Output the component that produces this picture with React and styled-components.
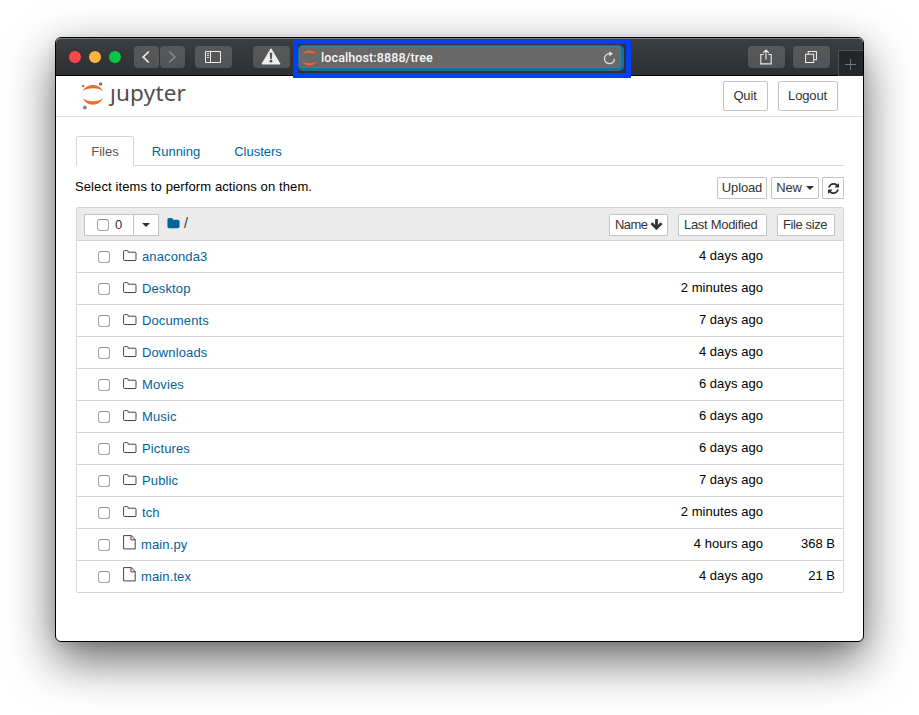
import React from "react";
import styled, { createGlobalStyle } from "styled-components";

const GlobalStyle = createGlobalStyle`
  *, *::before, *::after { box-sizing: border-box; }
  html, body { margin: 0; background: #fff; }
  body { font: 13px/20px "Liberation Sans", Arial, sans-serif; color: #000; overflow: hidden; }
  svg { display: block; flex: none; }
  button { font: inherit; margin: 0; cursor: pointer; }
`;

const Desktop = styled.div`
  width: 919px;
  height: 715px;
  padding: 37px 0 0 55px;
  background: #fff;
  overflow: hidden;
`;

const BrowserWindow = styled.div`
  width: 809px;
  height: 605px;
  border: 1px solid #000;
  border-radius: 6px;
  background: #fff;
  box-shadow: 0 18px 48px rgba(0, 0, 0, 0.6), 0 3px 12px rgba(0, 0, 0, 0.1);
`;

/* ---------- browser chrome ---------- */

const Toolbar = styled.header`
  display: flex;
  align-items: flex-start;
  height: 38px;
  padding: 8px 0 0 13px;
  background: linear-gradient(#3c3d3f, #2e2f31);
  border-top: 1px solid #77787a;
  border-bottom: 1px solid #000;
  border-radius: 5px 5px 0 0;
`;

const TrafficLights = styled.div`
  display: flex;
  gap: 8px;
  padding-top: 4px;
  margin-right: 13px;
`;

const Light = styled.span`
  width: 12px;
  height: 12px;
  border-radius: 50%;
  background: ${(p) => p.$color};
`;

const ChromeButton = styled.button`
  display: flex;
  align-items: center;
  justify-content: center;
  width: ${(p) => p.$width || 37}px;
  height: 22px;
  padding: 0 1px 0 0;
  margin-top: -1px;
  margin-right: ${(p) => p.$gap || 0}px;
  border: 0;
  border-radius: 4px;
  background: linear-gradient(#58595b, #525355);
  color: ${(p) => (p.$dim ? "#88898b" : "#ededed")};
`;

const AddressHighlight = styled.div`
  width: 338px;
  height: 38px;
  margin: -7px 117px 0 3px;
  padding: 1px 3px 0 0;
  border: 4px solid #0040f5;
  border-width: 4px 5px 5px 5px;
  background: #303133;
  position: relative;
  z-index: 1;
`;

const AddressField = styled.div`
  display: flex;
  align-items: center;
  width: 326px;
  height: 26px;
  padding: 2px 5px 0 3px;
  border: 1px solid #1b6f9c;
  border-width: 1px 3px 3px 1px;
  border-radius: 5px;
  background: #686868;
  box-shadow: inset 0 0 0 1px #3681a3;
`;

const Url = styled.span`
  flex: 1;
  margin-left: 4px;
  font: 500 12.5px/20px Roboto, "Open Sans", sans-serif;
  letter-spacing: 0.11px;
  color: #f6f6f6;
`;

const NewTab = styled.button`
  display: flex;
  align-items: center;
  justify-content: center;
  width: 25px;
  height: 26px;
  margin: 3px 0 0 8px;
  padding: 2px 2px 0 0;
  border: 1px solid #505153;
  border-width: 1px 0 0 1px;
  background: #252627;
  color: #77787a;
`;

/* ---------- page header ---------- */

const PageHeader = styled.header`
  display: flex;
  align-items: flex-start;
  height: 41px;
  padding: 5px 25px 0 26px;
  border-bottom: 1px solid #e3e3e3;
`;

const Logo = styled.div`
  display: flex;
  flex: 1;
`;

const Wordmark = styled.span`
  margin: -1px 0 0 5px;
  font: 400 22.5px/26px "Noto Sans", "Open Sans", sans-serif;
  letter-spacing: 0.2px;
  color: #4e4e4e;
  white-space: nowrap;
`;

const ClippedLetter = styled.span`
  display: inline-block;
  clip-path: inset(9px -4px -4px -4px);
`;

const HeaderButton = styled.button`
  width: ${(p) => p.$width}px;
  height: 30px;
  margin-left: 10px;
  padding: 0 1px 0 0;
  letter-spacing: -0.15px;
  border: 1px solid #c4c4c4;
  border-radius: 2px;
  background: #fff;
  color: #333;
`;

/* ---------- notebook tree ---------- */

const Page = styled.main`
  padding: 19px 19px 0 20px;
`;

const Tabs = styled.nav`
  display: flex;
  height: 30px;
  border-bottom: 1px solid #d6d6d6;
`;

const Tab = styled.a`
  height: ${(p) => (p.$active ? 30 : 29)}px;
  width: ${(p) => p.$width}px;
  padding-top: 5px;
  text-align: center;
  color: ${(p) => (p.$active ? "#555" : "#00639a")};
  background: #fff;
  border: 1px solid ${(p) => (p.$active ? "#d6d6d6" : "transparent")};
  border-bottom: 0;
  border-radius: 2px 2px 0 0;
`;

const ActionBar = styled.div`
  display: flex;
  align-items: center;
  gap: 4px;
  height: 22px;
  margin: 11px 0 8px;
`;

const Hint = styled.span`
  flex: 1;
  margin: -3px 0 0 -1px;
  letter-spacing: 0.11px;
`;

const SmallButton = styled.button`
  display: flex;
  align-items: center;
  justify-content: ${(p) => (p.$start ? "flex-start" : "center")};
  gap: ${(p) => (p.$start ? 3 : 4)}px;
  width: ${(p) => p.$width}px;
  height: 22px;
  padding: 0 ${(p) => (p.$start ? 5 : 0)}px;
  margin-left: ${(p) => p.$nudge || 0}px;
  border: 1px solid #c4c4c4;
  border-radius: 1px;
  background: #fff;
  color: #333;
  letter-spacing: ${(p) => p.$tracking || 0}px;
  white-space: nowrap;
`;

const FileTable = styled.section`
  border: 1px solid #d6d6d6;
  border-radius: 2px;
`;

const TableHead = styled.div`
  display: flex;
  align-items: center;
  height: 33px;
  padding: 1px 8px 0 7px;
  background: #ebebeb;
  border-bottom: 1px solid #d6d6d6;
`;

const SelectGroup = styled.div`
  display: flex;
  width: 75px;
  height: 22px;
  margin-right: 8px;
  border: 1px solid #c4c4c4;
  background: #fff;
  color: #333;
`;

const SelectAll = styled.label`
  display: flex;
  align-items: center;
  gap: 6px;
  width: 49px;
  padding-left: 12px;
  border-right: 1px solid #c4c4c4;
`;

const SelectMenu = styled.span`
  display: flex;
  flex: 1;
  align-items: center;
  justify-content: center;
  padding-top: 1px;
`;

const Breadcrumb = styled.span`
  display: flex;
  flex: 1;
  align-items: center;
  gap: 4px;
  margin-top: -3px;
  font-size: 14px;
  color: #333;
`;

const SortButtons = styled.div`
  display: flex;
  gap: 10px;
`;

const Checkbox = styled.input`
  appearance: none;
  width: 12px;
  height: 12px;
  margin: 0;
  flex: none;
  border: 1px solid #a2a2a2;
  border-top-color: #8c8c8c;
  border-radius: 3px;
  background: #fff;
`;

const Row = styled.div`
  display: flex;
  align-items: center;
  height: 32px;
  padding: 0 8px 0 21px;
  border-bottom: 1px solid #d6d6d6;
  &:last-child { height: 31px; border-bottom: 0; }
`;

const IconSlot = styled.span`
  width: 14px;
  margin: ${(p) => (p.$file ? "-5px 4px 0 13px" : "-1px 5px 0 13px")};
`;

const FileName = styled.a`
  flex: 1;
  letter-spacing: 0.12px;
  color: #00639a;
`;

const Modified = styled.span`
  margin: -2px 0 0;
  letter-spacing: 0.05px;
`;

const Size = styled.span`
  width: 72px;
  margin-top: -2px;
  text-align: right;
`;

/* ---------- icons ---------- */

const Glyph = ({ d, size = 14, color = "currentColor" }) => (
  <svg width={size} height={size} viewBox="0 0 1792 1792" fill={color}><path d={d} /></svg>
);

const FOLDER = "M1728 608v704q0 92-66 158t-158 66h-1216q-92 0-158-66t-66-158v-960q0-92 66-158t158-66h320q92 0 158 66t66 158v32h672q92 0 158 66t66 158z";
const ARROW_DOWN = "M1675 832q0 53-37 90l-651 652q-39 37-91 37-53 0-90-37l-651-652q-38-36-38-90 0-53 38-91l74-75q39-37 91-37 53 0 90 37l294 294v-704q0-52 38-90t90-38h128q52 0 90 38t38 90v704l294-294q37-37 90-37 52 0 91 37l75 75q37 39 37 91z";
const REFRESH = "M1639 1056q0 5-1 7-64 268-268 434.5t-478 166.5q-146 0-282.5-55t-243.5-157l-129 129q-19 19-45 19t-45-19-19-45v-448q0-26 19-45t45-19h448q26 0 45 19t19 45-19 45l-137 137q71 66 161 102t187 36q134 0 250-65t186-179q11-17 53-117 8-23 30-23h192q13 0 22.5 9.5t9.5 22.5zm25-800v448q0 26-19 45t-45 19h-448q-26 0-45-19t-19-45 19-45l138-138q-148-137-349-137-134 0-250 65t-186 179q-11 17-53 117-8 23-30 23h-199q-13 0-22.5-9.5t-9.5-22.5v-7q65-268 270-434.5t480-166.5q146 0 284 55.5t245 156.5l130-129q19-19 45-19t45 19 19 45z";

const Caret = () => (
  <svg width="8" height="4" viewBox="0 0 8 4"><path d="M0 0h8L4 4z" fill="#333" /></svg>
);

const Chevron = ({ flip }) => (
  <svg width="10" height="14" viewBox="0 0 10 14" fill="none" stroke="currentColor" strokeWidth="1.7">
    <path d={flip ? "M2.2 1.5 7.8 7l-5.6 5.5" : "M7.8 1.5 2.2 7l5.6 5.5"} />
  </svg>
);

const SidebarIcon = () => (
  <svg width="16" height="12" viewBox="0 0 16 12" fill="none" stroke="currentColor">
    <path d="M.5.5h15v11H.5zM5.5.5v11" />
    <path d="M2 2.5h2M2 4.5h2M2 6.5h2" strokeWidth=".9" />
  </svg>
);

const WarningIcon = () => (
  <svg width="20" height="18" viewBox="0 0 20 18">
    <path d="M10 1.3 18.6 15.8H1.4z" fill="#ededed" stroke="#ededed" strokeWidth="1.6" strokeLinejoin="round" />
    <path d="M8.7 4.8h2.6l-.5 6.2H9.2z" fill="#505153" />
    <circle cx="10" cy="13.2" r="1.4" fill="#505153" />
  </svg>
);

const ShareIcon = () => (
  <svg width="12" height="16" viewBox="0 0 12 16" fill="none" stroke="currentColor" strokeWidth="1.1">
    <path d="M3.6 5.5H.8v9.4h10.4V5.5H8.4M6 10.5V1M3.2 3.8 6 1l2.8 2.8" />
  </svg>
);

const WindowsIcon = () => (
  <svg width="12" height="12" viewBox="0 0 13 13" fill="none" stroke="currentColor" strokeWidth="1.1">
    <path d="M.6 3.6h8.8v8.8H.6zM3.5 3.2V.6h8.9v8.8H9.8" />
  </svg>
);

const PlusIcon = () => (
  <svg width="11" height="11" viewBox="0 0 11 11" stroke="currentColor"><path d="M5.5 0v11M0 5.5h11" /></svg>
);

const ReloadIcon = () => (
  <svg width="13" height="14" viewBox="0 0 13 14" fill="none" stroke="#e5e5e5" strokeWidth="1.2">
    <path d="M6.5 2.7a5 5 0 1 0 5 5" />
    <path d="M6.2.2 10 2.7 6.2 5.2z" fill="#e5e5e5" stroke="none" />
  </svg>
);

const Favicon = () => (
  <svg width="15" height="16" viewBox="0 0 15 16" fill="#f4622d">
    <path d="M.2 4.8C3.2-.9 11.8-.9 14.8 4.8 10.6 2.2 4.4 2.2.2 4.8zM.2 11.2c3 5.7 11.6 5.7 14.6 0-4.2 2.6-10.4 2.6-14.6 0z" />
  </svg>
);

const JupyterMark = () => (
  <svg width="23" height="29" viewBox="0 0 23 29">
    <path d="M.9 10.4C4 1.9 17.8 1.9 20.9 10.4 17 6.1 4.8 6.1.9 10.4zM.9 17C4 25.9 17.8 25.9 20.9 17 17 21.3 4.8 21.3.9 17z" fill="#f4692e" />
    <circle cx="18.6" cy="2.9" r="1.7" fill="#717171" />
    <circle cx="1.2" cy="5.1" r="1.2" fill="#717171" />
    <circle cx="2.9" cy="26.5" r="2" fill="#8a8a8a" />
  </svg>
);

const FolderIcon = () => (
  <svg width="14" height="12" viewBox="0 0 14 12" fill="none" stroke="#444">
    <path d="M.6 9.5v-8q0-.9.9-.9h2.8q.9 0 .9.9v.7h6.8q1 0 1 1v6.3q0 1-1 1H1.6q-1 0-1-1z" />
  </svg>
);

const FileIcon = () => (
  <svg width="13" height="15" viewBox="0 0 13 15" fill="none" stroke="#444">
    <path d="M.6.6h7.8l3.8 3.9v9.4H.6zM8 .6v4.2h4.2" />
  </svg>
);

/* ---------- data ---------- */

const entries = [
  ["anaconda3", "4 days ago"],
  ["Desktop", "2 minutes ago"],
  ["Documents", "7 days ago"],
  ["Downloads", "4 days ago"],
  ["Movies", "6 days ago"],
  ["Music", "6 days ago"],
  ["Pictures", "6 days ago"],
  ["Public", "7 days ago"],
  ["tch", "2 minutes ago"],
  ["main.py", "4 hours ago", "368 B"],
  ["main.tex", "4 days ago", "21 B"],
];

export default function App() {
  return (
    <Desktop>
      <GlobalStyle />
      <BrowserWindow>
        <Toolbar>
          <TrafficLights>
            <Light $color="#fc4a4b" />
            <Light $color="#fdb43e" />
            <Light $color="#0bc44a" />
          </TrafficLights>
          <ChromeButton $width={25} $gap={1}><Chevron /></ChromeButton>
          <ChromeButton $width={25} $gap={10} $dim><Chevron flip /></ChromeButton>
          <ChromeButton $gap={21}><SidebarIcon /></ChromeButton>
          <ChromeButton><WarningIcon /></ChromeButton>
          <AddressHighlight>
            <AddressField>
              <Favicon />
              <Url>localhost:8888/tree</Url>
              <ReloadIcon />
            </AddressField>
          </AddressHighlight>
          <ChromeButton $gap={8}><ShareIcon /></ChromeButton>
          <ChromeButton><WindowsIcon /></ChromeButton>
          <NewTab><PlusIcon /></NewTab>
        </Toolbar>

        <PageHeader>
          <Logo>
            <JupyterMark />
            <Wordmark><ClippedLetter>j</ClippedLetter>upyter</Wordmark>
          </Logo>
          <HeaderButton $width={45}>Quit</HeaderButton>
          <HeaderButton $width={60}>Logout</HeaderButton>
        </PageHeader>

        <Page>
          <Tabs>
            <Tab $active $width={58}>Files</Tab>
            <Tab $width={84}>Running</Tab>
            <Tab $width={80}>Clusters</Tab>
          </Tabs>

          <ActionBar>
            <Hint>Select items to perform actions on them.</Hint>
            <SmallButton $width={50} $tracking={-0.15}>Upload</SmallButton>
            <SmallButton $width={48} $tracking={-0.1}>New <Caret /></SmallButton>
            <SmallButton $width={22} $nudge={-1}><Glyph d={REFRESH} size={13} /></SmallButton>
          </ActionBar>

          <FileTable>
            <TableHead>
              <SelectGroup>
                <SelectAll><Checkbox type="checkbox" />0</SelectAll>
                <SelectMenu><Caret /></SelectMenu>
              </SelectGroup>
              <Breadcrumb><Glyph d={FOLDER} size={13} color="#00639a" />/</Breadcrumb>
              <SortButtons>
                <SmallButton $width={59} $start $tracking={-0.6}>Name <Glyph d={ARROW_DOWN} size={13} /></SmallButton>
                <SmallButton $width={89} $start $tracking={-0.3}>Last Modified</SmallButton>
                <SmallButton $width={58} $start $tracking={-0.4}>File size</SmallButton>
              </SortButtons>
            </TableHead>
            {entries.map(([name, modified, size]) => (
              <Row key={name}>
                <Checkbox type="checkbox" />
                <IconSlot $file={!!size}>{size ? <FileIcon /> : <FolderIcon />}</IconSlot>
                <FileName>{name}</FileName>
                <Modified>{modified}</Modified>
                <Size>{size}</Size>
              </Row>
            ))}
          </FileTable>
        </Page>
      </BrowserWindow>
    </Desktop>
  );
}
